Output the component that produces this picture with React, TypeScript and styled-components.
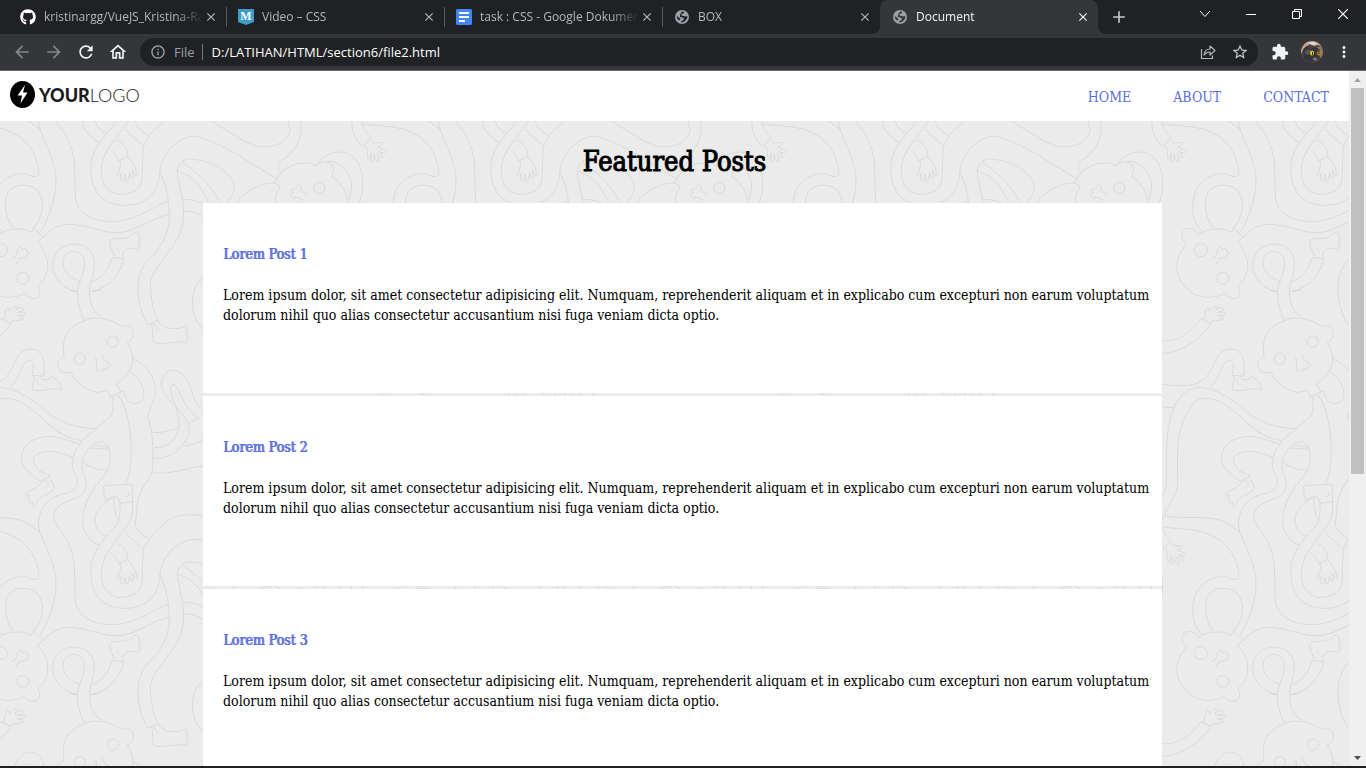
import React from "react";
import styled, { createGlobalStyle, css } from "styled-components";
import {
  MdAdd,
  MdArrowBack,
  MdArrowForward,
  MdClose,
  MdExtension,
  MdInfoOutline,
  MdMoreVert,
  MdOutlineHome,
  MdRefresh,
  MdStarBorder,
} from "react-icons/md";
import { FaGithub } from "react-icons/fa";

const GlobalStyle = createGlobalStyle`
  * { box-sizing: border-box; }
  body { margin: 0; background: #231f20; }
  button, input { font: inherit; }
`;

const uiFont = `"Open Sans", "Noto Sans", sans-serif`;
const pageFont = `"DejaVu Serif Condensed", "DejaVu Serif", serif`;

const Window = styled.div`
  height: 100vh;
  display: flex;
  flex-direction: column;
  overflow: hidden;
  border-bottom: 2px solid #231f20;
`;

const TabStrip = styled.div`
  flex: none;
  display: flex;
  align-items: flex-start;
  height: 34px;
  padding-left: 8px;
  background: #202124;
  font: 12px/16px ${uiFont};
`;

const TabItem = styled.div<{ $active?: boolean; $divided?: boolean }>`
  position: relative;
  flex: 0 1 218px;
  min-width: 0;
  height: 34px;
  display: flex;
  align-items: center;
  padding: 0 7px 0 12px;
  color: ${(p) => (p.$active ? "#f1f3f4" : "#b4b7bb")};

  ${(p) =>
    p.$divided &&
    css`
      &::before {
        content: "";
        position: absolute;
        left: 0;
        top: 7px;
        width: 1px;
        height: 20px;
        background: #5a5b5f;
      }
    `}

  ${(p) =>
    p.$active &&
    css`
      background: #35363a;
      border-radius: 8px 8px 0 0;
      &::before,
      &::after {
        content: "";
        position: absolute;
        bottom: 0;
        width: 8px;
        height: 8px;
      }
      &::before {
        right: 100%;
        background: radial-gradient(circle at 0 0, #202124 8px, #35363a 8px);
      }
      &::after {
        left: 100%;
        background: radial-gradient(circle at 100% 0, #202124 8px, #35363a 8px);
      }
    `}
`;

const Favicon = styled.span`
  flex: none;
  display: flex;
  width: 16px;
  height: 16px;
  margin-right: 8px;
  color: #9aa0a6;
`;

const TabTitle = styled.span`
  flex: 1;
  min-width: 0;
  overflow: hidden;
  white-space: nowrap;
  mask-image: linear-gradient(to right, #000 calc(100% - 28px), transparent);
`;

const PlainButton = styled.button`
  flex: none;
  display: flex;
  align-items: center;
  justify-content: center;
  padding: 0;
  border: 0;
  background: none;
  color: inherit;
`;

const CloseTab = styled(PlainButton)`
  width: 16px;
  height: 16px;
`;

const NewTab = styled(PlainButton)`
  width: 28px;
  height: 34px;
  margin-left: 7px;
  color: #c4c6c9;
`;

const WindowControls = styled.div`
  display: flex;
  margin-left: auto;
`;

const WindowButton = styled(PlainButton)`
  width: 46px;
  height: 28px;
  color: #fff;
`;

const Toolbar = styled.div`
  flex: none;
  display: flex;
  align-items: center;
  gap: 6px;
  height: 37px;
  padding: 0 6px;
  background: #35363a;
  border-bottom: 1px solid #69666d;
`;

const ButtonGroup = styled.div`
  display: flex;
`;

const ToolButton = styled(PlainButton)<{ $tone?: string }>`
  width: 32px;
  height: 28px;
  color: ${(p) => p.$tone || "#f1f3f4"};
`;

const AddressBar = styled.div`
  flex: 1;
  min-width: 0;
  display: flex;
  align-items: center;
  height: 28px;
  padding: 0 2px 0 10px;
  border-radius: 14px;
  background: #202124;
  color: #9aa0a6;
  font: 13px/20px ${uiFont};
`;

const Scheme = styled.label`
  margin-left: 8px;
  padding-right: 7px;
  line-height: 16px;
  border-right: 1px solid #75787c;
`;

const AddressInput = styled.input`
  flex: 1;
  min-width: 0;
  height: 24px;
  padding: 0 0 0 9px;
  border: 0;
  outline: 0;
  background: none;
  color: #fff;
`;

const Viewport = styled.div`
  flex: 1;
  min-height: 0;
  display: flex;
`;

const Page = styled.div`
  position: relative;
  flex: 1;
  min-width: 0;
  overflow: hidden;
  background: #ebebeb;
  color: #000;
  font: 14px/20px ${pageFont};
`;

const Backdrop = styled.svg`
  position: absolute;
  inset: 0;
  width: 100%;
  height: 100%;
`;

const SiteHeader = styled.header`
  position: relative;
  display: flex;
  align-items: flex-start;
  justify-content: space-between;
  height: 50px;
  padding: 0 20px 0 10px;
  background: #fff;
`;

const Logo = styled.a`
  display: flex;
  align-items: center;
  gap: 4px;
  height: 47px;
  color: #1c1c1c;
  font: 300 18px/24px Lato, sans-serif;
  text-decoration: none;

  strong {
    font-weight: 900;
  }
`;

const SiteNav = styled.nav`
  display: flex;
  gap: 42px;
  line-height: 52px;
`;

const NavLink = styled.a`
  color: #5a70dc;
  text-decoration: none;
`;

const Main = styled.main`
  position: relative;
`;

const Heading = styled.h1`
  margin: 21px 0;
  font-size: 27px;
  font-weight: 400;
  line-height: 40px;
  text-align: center;
  -webkit-text-stroke: 1px currentColor;
`;

const PostList = styled.div`
  display: flex;
  flex-direction: column;
  gap: 3px;
  margin: 0 187px 0 203px;
`;

const Post = styled.article`
  min-height: 190px;
  padding: 20px 8px 20px 20px;
  background: #fff;
`;

const PostTitle = styled.h4`
  margin: 21px 0;
  font-size: 14px;
  font-weight: 400;
  color: #5a70dc;
  text-shadow: 1px 0 0 currentColor;
`;

const PostText = styled.p`
  margin: 0;
`;

const Scrollbar = styled.div`
  flex: none;
  display: flex;
  flex-direction: column;
  width: 17px;
  background: #f0f0f0;
`;

const ScrollArrow = styled(PlainButton)`
  width: 17px;
  height: 17px;
`;

const ScrollTrack = styled.div`
  flex: 1;
  padding: 0 2px;
`;

const ScrollThumb = styled.div`
  height: calc(100% * 7 / 12);
  background: #c1c1c1;
`;

const TILE_W = 400;
const TILE_H = 403;

/* The doodle is drawn in thirds of a pixel, in blocks placed on the tile. */
const doodle: { x: number; y: number; lines: string[]; eyes: number[][] }[] = [
  {
    x: 0,
    y: -1,
    lines: [
      "M115 153L120 178C140 230 168 280 168 330C168 380 150 440 120 487",
      "M85 153L120 178",
      "M167 153C205 200 225 240 224 310L226 385C232 430 280 457 340 455C420 450 460 405 505 395",
      "M130 502C150 480 175 463 205 463C270 465 300 490 360 488C420 480 460 440 507 433",
      "M550 388C580 388 600 395 612 405",
      "M552 424C575 420 595 430 610 442",
      "M352 153C320 190 285 225 274 270C265 340 290 400 365 406C430 408 475 380 480 303C487 240 540 200 585 199C605 199 650 220 700 247",
      "M385 153C350 205 310 240 305 290C298 340 325 373 362 373C400 373 425 355 426 325C428 280 428 240 432 225C445 195 470 170 492 153",
      "M248 153C250 180 270 205 300 218",
      "M286 153C290 170 305 185 320 190",
      "M376 178C395 200 415 215 430 225",
      "M405 153C410 175 430 190 445 195",
      "M352 210C370 220 383 235 383 258L357 273C352 258 340 245 331 237",
      "M360 274C365 290 355 305 351 316C355 320 360 316 365 308C362 322 360 333 365 333C372 334 374 320 376 312C374 325 374 336 381 333C388 330 388 320 388 308C392 320 394 328 399 324C402 318 398 308 396 300C402 308 406 320 411 316C413 308 405 290 398 280C392 270 388 265 383 260",
      "M480 303C495 340 508 380 508 440C508 490 480 540 440 575C420 600 413 630 414 660",
      "M703 350C703 315 640 268 565 267C535 272 530 300 532 310C545 380 553 400 550 450C545 500 510 540 480 580C450 620 450 640 452 660",
      "M548 277C590 305 630 345 660 395",
      "M535 304C570 315 600 340 625 395",
      "M337 562L372 567C360 610 330 655 272 665",
      "M337 562C325 600 300 630 277 634",
      "M232 665C180 655 150 610 160 570C170 520 240 505 272 545C295 580 275 620 268 660",
      "M243 632C205 630 180 590 193 560C210 535 245 540 252 570C258 600 235 640 232 660",
      "M345 558C335 540 325 520 332 510C350 498 385 515 402 488C412 484 420 488 414 497C423 497 425 505 415 508C425 512 425 520 414 520C424 524 422 532 414 532C420 540 410 540 400 536C380 532 365 545 368 563",
      "M357 528C350 535 350 542 358 545",
      "M610 625C590 640 585 650 583 660",
    ],
    eyes: [],
  },
  {
    x: -120,
    y: -1,
    lines: [
      "M245 160C300 172 350 163 400 190C450 215 470 260 476 300C480 330 455 318 440 312C400 305 350 330 340 390C333 430 345 465 368 487",
      "M398 473C375 440 370 395 385 365C405 340 455 338 475 365C497 400 488 440 460 475",
      "M352 495C385 472 430 472 455 487L460 473L490 502L473 515C500 545 510 580 498 615C490 635 480 640 474 645C482 665 480 685 460 685C450 685 440 680 432 671C400 687 350 690 315 650C280 610 283 560 320 523C300 505 300 478 325 475C340 474 352 485 357 495",
      "M396 566C408 560 412 550 413 538C415 530 425 530 428 541C432 530 444 535 440 545C450 545 448 557 437 556C445 560 440 567 430 563C420 562 412 570 408 582",
    ],
    eyes: [
      [362, 540, 20],
      [429, 625, 18],
    ],
  },
  {
    x: 200,
    y: 49,
    lines: [
      "M100 97L228 175",
      "M30 0C80 30 140 75 180 80C240 85 280 50 268 20L262 -10",
      "M300 -5C315 60 280 100 245 120C232 130 230 145 243 158C280 125 325 122 350 138C365 120 395 120 400 145C402 160 395 165 395 170C430 190 440 225 445 248",
      "M103 200C103 220 90 235 80 248",
      "M243 158L222 188L240 198C230 215 225 230 225 248",
      "M222 188C180 190 130 215 112 248",
      "M350 135C380 90 450 75 480 140C495 180 487 220 478 248",
      "M375 125C420 115 450 160 455 195C455 215 450 230 447 240",
      "M325 225C315 220 300 215 303 200C300 190 290 195 287 208C278 200 270 212 280 217C268 225 272 237 285 233C300 232 308 238 312 243",
      "M455 0C455 40 470 70 490 80L513 55C500 40 485 20 483 0",
      "M497 78C505 95 500 110 505 117C510 118 512 108 514 100C512 112 512 125 518 124C523 122 522 110 522 103C526 115 530 128 536 125C540 120 532 108 530 100C538 108 545 118 549 112C548 105 540 100 535 94C545 97 556 102 557 95C552 88 540 85 532 82C540 80 550 74 545 68C535 65 525 75 515 62",
    ],
    eyes: [[358, 204, 17]],
  },
  {
    x: 0,
    y: 219,
    lines: [
      "M414 0C415 40 425 80 446 105L474 90C462 70 455 40 452 0",
      "M455 100C460 120 455 145 462 156C485 168 515 152 555 156C565 156 567 148 558 146C567 144 567 134 556 134C567 130 565 120 555 122C566 118 562 106 552 110C530 120 490 120 474 92",
      "M462 100C465 112 470 118 478 122",
      "M232 0C232 40 240 70 255 92C270 80 320 78 365 110C375 103 400 105 401 130C400 150 385 155 382 155C405 200 400 225 388 240C380 260 365 272 350 282L362 305",
      "M372 300L328 324",
      "M268 0C268 40 280 70 303 80",
      "M208 0C220 6 228 6 232 5",
      "M272 5L300 0",
      "M255 92C205 105 180 150 193 203C190 203 176 205 172 222C170 240 190 252 213 247C225 275 255 300 290 307C305 307 318 300 322 302L332 322",
      "M583 0C570 50 580 90 610 118",
      "M283 197C293 205 288 225 289 240C292 247 300 243 301 238C304 245 312 243 311 235C317 240 322 238 321 231C330 234 334 226 328 220C315 215 308 205 305 190",
      "M400 207C440 225 475 270 464 320C455 350 443 360 444 385C458 420 460 470 458 540C450 570 420 590 412 640C410 660 410 680 405 702",
      "M388 240C415 265 435 290 431 320C425 342 400 345 385 335C375 325 375 310 370 302",
      "M355 315C380 350 393 420 394 480C392 530 390 560 375 583",
      "M337 320C340 350 345 370 325 385C300 410 260 435 240 460C220 490 210 520 222 545C240 575 230 600 205 608C160 615 118 640 115 702",
      "M325 472C320 455 295 448 275 467C250 490 240 520 250 550C270 590 255 615 225 625C180 640 155 660 163 690L172 702",
      "M325 472C335 500 330 530 320 545C300 580 245 620 248 702",
      "M250 517C265 530 290 540 320 540",
      "M272 474L330 478",
      "M285 466L330 472",
      "M122 575C95 555 60 530 64 500C75 440 140 435 170 442C200 448 225 460 242 463",
      "M122 575L150 558C120 545 95 530 101 505C115 475 170 480 220 503",
      "M128 572C120 590 95 600 80 608C76 614 82 620 88 617C80 625 82 632 90 628C86 638 92 642 98 635C94 645 98 655 105 645C115 620 145 615 160 600C168 590 155 575 148 565",
      "M135 572C145 572 148 582 142 587",
      "M398 635L396 583C365 580 345 590 320 585C308 585 308 597 316 597C306 600 308 608 315 608C306 612 308 620 316 619C308 625 315 632 325 627C340 620 355 612 360 640L398 635C400 660 395 685 385 702",
      "M383 605C390 612 388 620 378 620",
      "M360 640C360 660 362 680 352 702",
      "M342 620C340 650 345 670 354 688",
      "M342 622C300 640 280 670 286 702",
      "M455 427C490 430 510 420 535 414",
      "M565 400L595 385C560 360 545 320 530 292C520 275 508 285 512 300C515 330 540 360 537 410C530 450 500 475 462 473",
      "M460 505C510 510 560 470 568 420C565 370 500 340 484 290C480 260 505 240 520 240C560 245 570 290 580 320C590 345 600 352 610 358",
      "M555 468C580 465 600 455 610 448",
      "M458 548C520 555 570 530 610 528",
      "M492 702C520 675 550 670 610 677",
    ],
    eyes: [
      [239, 207, 17],
      [338, 155, 17],
    ],
  },
  {
    x: -60,
    y: 219,
    lines: [
      "M470 416C400 415 340 390 290 340C240 305 200 285 160 295C110 310 85 370 80 470L80 580C75 610 65 620 60 640",
      "M425 452C370 445 330 410 290 370C250 335 220 320 180 327C140 345 115 420 113 470L112 590C100 640 75 660 66 690",
      "M66 283C120 290 170 290 195 265C225 235 225 180 270 177C305 178 320 210 310 258L275 256C285 230 282 210 265 212C245 215 240 265 210 293",
      "M283 258C285 275 270 290 280 302C310 305 340 290 360 300C368 298 367 290 358 290C365 285 360 275 352 278C356 268 350 262 343 268C345 258 338 253 333 262C325 270 310 275 300 258",
      "M288 270C292 280 296 284 302 284",
      "M66 152C110 155 140 140 185 85L212 102C180 150 120 190 66 190",
      "M192 87C195 75 195 60 202 52C210 52 208 62 208 65C215 55 228 45 233 50C236 55 228 58 224 62C232 55 248 50 250 56C250 64 238 64 232 68C242 65 258 66 257 73C252 80 240 74 232 78C240 78 252 80 250 87C240 93 225 88 210 98",
      "M66 350C80 355 95 353 107 350",
      "M75 678C150 690 210 670 265 702",
    ],
    eyes: [],
  },
];

function MonkeyBackdrop() {
  const shifts = [-1, 0, 1].flatMap((i) => [-1, 0, 1].map((j) => [i, j]));
  return (
    <Backdrop aria-hidden="true">
      <defs>
        <g id="doodle" fill="none" stroke="#d9d9d9" strokeWidth="3">
          {doodle.map((block) => (
            <g
              key={`${block.x},${block.y}`}
              transform={`translate(${block.x} ${block.y}) scale(${1 / 3})`}
            >
              {block.lines.map((d) => (
                <path key={d} d={d} />
              ))}
              {block.eyes.map(([cx, cy, r]) => (
                <circle key={cx} cx={cx} cy={cy} r={r} />
              ))}
            </g>
          ))}
        </g>
        <pattern id="tile" width={TILE_W} height={TILE_H} patternUnits="userSpaceOnUse">
          {shifts.map(([i, j]) => (
            <use key={`${i},${j}`} href="#doodle" x={i * TILE_W} y={j * TILE_H} />
          ))}
        </pattern>
      </defs>
      <rect width="100%" height="100%" fill="url(#tile)" />
    </Backdrop>
  );
}

const RibbonIcon = () => (
  <svg width="16" height="16" viewBox="0 0 16 16">
    <path d="M0 0H16V13L8 16L0 13Z" fill="#3d9cc8" />
    <text x="8" y="11" textAnchor="middle" fill="#fff" fontFamily="Liberation Serif" fontWeight="700" fontSize="12">
      M
    </text>
  </svg>
);

const DocsIcon = () => (
  <svg width="16" height="16" viewBox="0 0 16 16">
    <rect width="16" height="16" rx="1.5" fill="#4285f4" />
    <path d="M3 4H13M3 8H13M3 12H9" stroke="#fff" strokeWidth="2" />
  </svg>
);

const GlobeIcon = ({ cut }: { cut: string }) => (
  <svg width="16" height="16" viewBox="0 0 16 16">
    <circle cx="8" cy="8" r="7" fill="#9aa0a6" />
    <path
      d="M8 2.500L10.500 3L9 4.500L7.500 5V6.500L9.500 7L11.500 7.500L13.500 7L13 9.500L11.500 11.500L9.500 13L7 13.500L7.500 12L9.500 11L10 9.500L8.500 8.500L6 8L6 6L7 4Z"
      fill={cut}
    />
    <path d="M2.500 7L5 8.500L6.500 10.500L5 11.500L3.500 10Z" fill={cut} />
  </svg>
);

const ShareIcon = () => (
  <svg width="16" height="16" viewBox="0 0 16 16" fill="none" stroke="currentColor" strokeWidth="1.2">
    <path d="M1.5 5V14.5H12.5V11.5" />
    <path d="M4 11C4.500 7 7 5 10 5V2L15 6.500L10 11V8C7.500 8 5.500 9 4 11Z" strokeLinejoin="round" />
  </svg>
);

const Avatar = () => (
  <svg width="22" height="22" viewBox="0 0 22 22">
    <defs>
      <clipPath id="round">
        <circle cx="11" cy="11" r="11" />
      </clipPath>
    </defs>
    <g clipPath="url(#round)">
      <rect width="22" height="22" fill="#4a4643" />
      <path d="M0 0H22V6L17 4L13 5L9 3L3 7L0 13Z" fill="#c9a184" />
      <path d="M6 2L12 1L17 3L12 4Z" fill="#e8ddd5" />
      <path d="M16 6L22 5V15L19 17Z" fill="#85776c" />
      <path d="M2 9L6 5L9 8L15 6L19 9L18 18L10 22L3 18Z" fill="#35353a" />
      <path d="M4 10L8 8L10 10L8 14L4 13Z" fill="#56565b" />
      <ellipse cx="11" cy="12" rx="2" ry="2.500" fill="#e8d01c" />
      <ellipse cx="18" cy="12" rx="2" ry="2.500" fill="#d98215" />
      <path d="M11.500 11V14M18 10V13" stroke="#333" />
      <path d="M11 18L14 16L17 18L14 20Z" fill="#77706c" />
    </g>
  </svg>
);

const LogoMark = () => (
  <svg width="25" height="27" viewBox="0 0 25 27">
    <ellipse cx="12.500" cy="13.500" rx="12.500" ry="13.500" fill="#000" />
    <path d="M15 4L7.500 14.500H12L10.500 22.500L17.500 11.500H13Z" fill="#fff" />
  </svg>
);

const tabs = [
  { title: "kristinargg/VueJS_Kristina-Ra", icon: <FaGithub size={16} color="#fff" /> },
  { title: "Video – CSS", icon: <RibbonIcon /> },
  { title: "task : CSS - Google Dokumen", icon: <DocsIcon /> },
  { title: "BOX", icon: <GlobeIcon cut="#202124" /> },
  { title: "Document", icon: <GlobeIcon cut="#35363a" />, active: true },
];

const body =
  "Lorem ipsum dolor, sit amet consectetur adipisicing elit. Numquam, reprehenderit aliquam et in explicabo cum excepturi non earum voluptatum dolorum nihil quo alias consectetur accusantium nisi fuga veniam dicta optio.";

const posts = ["Lorem Post 1", "Lorem Post 2", "Lorem Post 3"];

export default function App() {
  return (
    <>
      <GlobalStyle />
      <Window>
        <TabStrip>
          {tabs.map((tab, i) => (
            <TabItem key={tab.title} $active={tab.active} $divided={i > 0 && !tab.active}>
              <Favicon>{tab.icon}</Favicon>
              <TabTitle>{tab.title}</TabTitle>
              <CloseTab aria-label={`Close ${tab.title}`}>
                <MdClose size={14} />
              </CloseTab>
            </TabItem>
          ))}
          <NewTab aria-label="New tab">
            <MdAdd size={20} />
          </NewTab>
          <WindowControls>
            <WindowButton aria-label="Search tabs">
              <svg width="12" height="12" viewBox="0 0 12 12" fill="none" stroke="currentColor">
                <path d="M1 3L6 8.500L11 3" />
              </svg>
            </WindowButton>
            <WindowButton aria-label="Minimize">
              <svg width="10" height="10" viewBox="0 0 10 10" stroke="currentColor">
                <path d="M0 5.500H10" />
              </svg>
            </WindowButton>
            <WindowButton aria-label="Restore">
              <svg width="10" height="10" viewBox="0 0 10 10" fill="none" stroke="currentColor">
                <path d="M.5 2.500H7.500V9.500H.5ZM2.500 2.500V.5H9.500V7.500H7.500" />
              </svg>
            </WindowButton>
            <WindowButton aria-label="Close window">
              <svg width="10" height="10" viewBox="0 0 10 10" stroke="currentColor" strokeWidth="1.2">
                <path d="M0 0L10 10M10 0L0 10" />
              </svg>
            </WindowButton>
          </WindowControls>
        </TabStrip>

        <Toolbar>
          <ButtonGroup>
            <ToolButton aria-label="Back" $tone="#85878a">
              <MdArrowBack size={20} />
            </ToolButton>
            <ToolButton aria-label="Forward" $tone="#85878a">
              <MdArrowForward size={20} />
            </ToolButton>
            <ToolButton aria-label="Reload">
              <MdRefresh size={20} />
            </ToolButton>
            <ToolButton aria-label="Home">
              <MdOutlineHome size={20} />
            </ToolButton>
          </ButtonGroup>
          <AddressBar>
            <MdInfoOutline size={16} />
            <Scheme htmlFor="address">File</Scheme>
            <AddressInput id="address" defaultValue="D:/LATIHAN/HTML/section6/file2.html" />
            <ToolButton aria-label="Share" $tone="#b4b6b9">
              <ShareIcon />
            </ToolButton>
            <ToolButton aria-label="Bookmark" $tone="#c8cacd">
              <MdStarBorder size={18} />
            </ToolButton>
          </AddressBar>
          <ButtonGroup>
            <ToolButton aria-label="Extensions">
              <MdExtension size={18} />
            </ToolButton>
            <ToolButton aria-label="Profile">
              <Avatar />
            </ToolButton>
            <ToolButton aria-label="Menu">
              <MdMoreVert size={18} />
            </ToolButton>
          </ButtonGroup>
        </Toolbar>

        <Viewport>
          <Page>
            <MonkeyBackdrop />
            <SiteHeader>
              <Logo href="#">
                <LogoMark />
                <span>
                  <strong>YOUR</strong>LOGO
                </span>
              </Logo>
              <SiteNav>
                <NavLink href="#home">HOME</NavLink>
                <NavLink href="#about">ABOUT</NavLink>
                <NavLink href="#contact">CONTACT</NavLink>
              </SiteNav>
            </SiteHeader>
            <Main>
              <Heading>Featured Posts</Heading>
              <PostList>
                {posts.map((title) => (
                  <Post key={title}>
                    <PostTitle>{title}</PostTitle>
                    <PostText>{body}</PostText>
                  </Post>
                ))}
              </PostList>
            </Main>
          </Page>
          <Scrollbar>
            <ScrollArrow aria-label="Scroll up">
              <svg width="7" height="4" viewBox="0 0 7 4">
                <path d="M0 4L3.500 0L7 4Z" fill="#a3a3a3" />
              </svg>
            </ScrollArrow>
            <ScrollTrack>
              <ScrollThumb />
            </ScrollTrack>
            <ScrollArrow aria-label="Scroll down">
              <svg width="7" height="4" viewBox="0 0 7 4">
                <path d="M0 0L3.500 4L7 0Z" fill="#505050" />
              </svg>
            </ScrollArrow>
          </Scrollbar>
        </Viewport>
      </Window>
    </>
  );
}
